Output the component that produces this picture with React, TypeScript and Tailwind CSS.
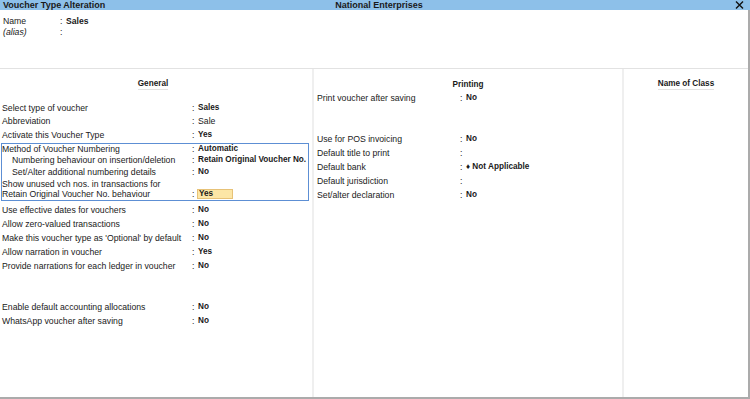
import React from "react";

type RowProps = {
  label: React.ReactNode;
  value?: React.ReactNode;
  bold?: boolean;
  indent?: boolean;
  cls?: string;
  labelW?: string;
};

const Row = ({ label, value, bold = true, indent = false, cls = "h-[14px]", labelW = "w-[190px]" }: RowProps) => (
  <div className={`flex items-center ${cls}`}>
    <div className={`${labelW} shrink-0 text-[8.7px] leading-[10px] whitespace-nowrap ${indent ? "pl-[10px]" : ""}`}>
      {label}
    </div>
    <span className="w-[6px] shrink-0 text-[8.7px] leading-[10px]">:</span>
    <span className={`whitespace-nowrap leading-[10px] ${bold ? "font-bold text-[8.2px]" : "text-[8.7px]"}`}>{value}</span>
  </div>
);

export default function App() {
  return (
    <div className="w-[750px] h-[399px] bg-white flex flex-col text-[#1a1a1a] font-['Liberation_Sans',Arial,sans-serif]">
      {/* Title bar */}
      <div className="h-[10px] bg-[#8dc0e9] grid grid-cols-[1fr_auto_1fr] items-center">
        <span className="pl-[3px] font-bold text-[9px] leading-[10px]">Voucher Type Alteration</span>
        <span className="pl-[8px] font-bold text-[9px] leading-[10px]">National Enterprises</span>
        <div className="flex justify-end pr-[6px]">
          <svg width="9" height="8" viewBox="0 0 9 8">
            <path d="M1 0.5 L8 7.5 M8 0.5 L1 7.5" stroke="#111" strokeWidth="1.4" />
          </svg>
        </div>
      </div>

      <div className="flex-1 flex flex-col border-r-2 border-b-2 border-[#ababab]">
        {/* Name / alias */}
        <div className="h-[59px] border-b border-[#e2e2e2] pt-[5px] pl-[3px]">
          <div className="flex items-center h-[11px]">
            <span className="w-[57px] text-[8.7px] leading-[10px]">Name</span>
            <span className="w-[6px] text-[8.7px] leading-[10px]">:</span>
            <span className="font-bold text-[8.6px] leading-[10px]">Sales</span>
          </div>
          <div className="flex items-center h-[11px]">
            <span className="w-[57px] text-[8.7px] leading-[10px] italic">(alias)</span>
            <span className="w-[6px] text-[8.7px] leading-[10px]">:</span>
          </div>
        </div>

        <div className="flex-1 flex">
          {/* General */}
          <div className="w-[314px] shrink-0 border-r-2 border-[#efefef]">
            <div className="mt-[8px] h-[14px] flex items-center justify-center pr-[6px]">
              <span className="font-bold text-[8.2px] leading-[10px] border-b border-[#e2e2e2]">General</span>
            </div>
            <div className="pl-[2px] mt-[10px]">
              <Row cls="h-[13.5px]" label="Select type of voucher" value="Sales" />
              <Row cls="h-[13.5px]" label="Abbreviation" value="Sale" bold={false} />
              <Row cls="h-[13.5px]" label="Activate this Voucher Type" value="Yes" />
            </div>
            <div className="mt-[1.5px] ml-[1px] w-[308px] border border-[#5d8fd4] pb-[1px]">
              <Row cls="h-[10px]" label="Method of Voucher Numbering" value="Automatic" />
              <Row cls="h-[12px]" indent label="Numbering behaviour on insertion/deletion" value="Retain Original Voucher No." />
              <Row cls="h-[12px]" indent label="Set/Alter additional numbering details" value="No" />
              <div className="mt-[1px] flex items-end">
                <div className="w-[190px] shrink-0 text-[8.7px] leading-[10px]">
                  <div>Show unused vch nos. in transactions for</div>
                  <div>Retain Original Voucher No. behaviour</div>
                </div>
                <span className="w-[5px] shrink-0 text-[8.7px] leading-[10px]">:</span>
                <span className="w-[36px] h-[10px] bg-[#fce6a6] border border-[#e7c277] pl-[1px] font-bold text-[8.2px] leading-[8px]">Yes</span>
              </div>
            </div>
            <div className="pl-[2px] mt-[2px]">
              <Row label="Use effective dates for vouchers" value="No" />
              <Row label="Allow zero-valued transactions" value="No" />
              <Row label="Make this voucher type as 'Optional' by default" value="No" />
              <Row label="Allow narration in voucher" value="Yes" />
              <Row label="Provide narrations for each ledger in voucher" value="No" />
              <div className="h-[27px]" />
              <Row label="Enable default accounting allocations" value="No" />
              <Row label="WhatsApp voucher after saving" value="No" />
            </div>
          </div>

          {/* Printing */}
          <div className="w-[310px] shrink-0 border-r-2 border-[#efefef]">
            <div className="mt-[9px] h-[13px] flex items-center justify-center">
              <span className="font-bold text-[8.2px] leading-[10px]">Printing</span>
            </div>
            <div className="pl-[3px]">
              <Row labelW="w-[143px]" label="Print voucher after saving" value="No" />
              <div className="h-[27px]" />
              <Row labelW="w-[143px]" label="Use for POS invoicing" value="No" />
              <Row labelW="w-[143px]" label="Default title to print" value="" />
              <Row labelW="w-[143px]" label="Default bank" value={<><span className="text-[8px]">♦</span> Not Applicable</>} />
              <Row labelW="w-[143px]" label="Default jurisdiction" value="" />
              <Row labelW="w-[143px]" label="Set/alter declaration" value="No" />
            </div>
          </div>

          {/* Name of Class */}
          <div className="flex-1">
            <div className="mt-[8px] h-[14px] flex items-center justify-center">
              <span className="font-bold text-[8.2px] leading-[10px] border-b border-[#e2e2e2]">Name of Class</span>
            </div>
          </div>
        </div>
      </div>
    </div>
  );
}
